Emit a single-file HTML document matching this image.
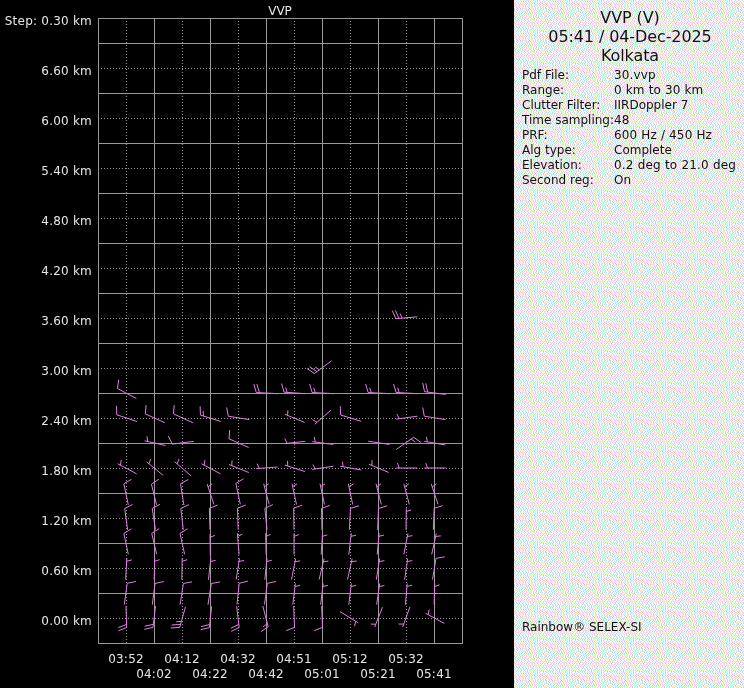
<!DOCTYPE html>
<html><head><meta charset="utf-8"><title>VVP</title>
<style>
html,body{margin:0;padding:0;background:#000;}
body{width:744px;height:688px;position:relative;overflow:hidden;font-family:"DejaVu Sans","Liberation Sans",sans-serif;color:#e6e6e6;}
#plot{position:absolute;left:0;top:0;width:744px;height:688px;}
.yl,.tl,#ttl,#panel div{will-change:transform;}
.yl{position:absolute;left:0;width:92px;text-align:right;font-size:12px;line-height:14px;height:14px;white-space:nowrap;letter-spacing:0.22px;}
.tl{position:absolute;width:60px;text-align:center;font-size:12px;line-height:14px;height:14px;white-space:nowrap;letter-spacing:0.22px;}
#ttl{position:absolute;left:229.6px;width:100px;text-align:center;top:4px;font-size:12px;line-height:14px;}
#panel{position:absolute;left:514px;top:0;width:230px;height:688px;background:#ebebeb;color:#111;}
#panel .h{position:absolute;left:0.5px;letter-spacing:-0.1px;width:230px;text-align:center;font-size:16px;line-height:19px;height:19px;white-space:nowrap;}
#panel .k{position:absolute;left:8px;font-size:12px;line-height:15px;height:15px;white-space:nowrap;}
#panel .v{position:absolute;left:100px;font-size:12px;line-height:15px;height:15px;white-space:nowrap;}
</style></head><body>

<svg id="plot" width="744" height="688" viewBox="0 0 744 688" shape-rendering="crispEdges">
<rect x="98" y="18" width="365" height="1" fill="#999999"/>
<rect x="98" y="43" width="365" height="1" fill="#999999"/>
<rect x="98" y="93" width="365" height="1" fill="#999999"/>
<rect x="98" y="143" width="365" height="1" fill="#999999"/>
<rect x="98" y="193" width="365" height="1" fill="#999999"/>
<rect x="98" y="243" width="365" height="1" fill="#999999"/>
<rect x="98" y="293" width="365" height="1" fill="#999999"/>
<rect x="98" y="343" width="365" height="1" fill="#999999"/>
<rect x="98" y="393" width="365" height="1" fill="#999999"/>
<rect x="98" y="443" width="365" height="1" fill="#999999"/>
<rect x="98" y="493" width="365" height="1" fill="#999999"/>
<rect x="98" y="543" width="365" height="1" fill="#999999"/>
<rect x="98" y="593" width="365" height="1" fill="#999999"/>
<rect x="98" y="643" width="365" height="1" fill="#999999"/>
<rect x="98" y="18" width="1" height="626" fill="#999999"/>
<rect x="154" y="18" width="1" height="626" fill="#999999"/>
<rect x="210" y="18" width="1" height="626" fill="#999999"/>
<rect x="266" y="18" width="1" height="626" fill="#999999"/>
<rect x="322" y="18" width="1" height="626" fill="#999999"/>
<rect x="378" y="18" width="1" height="626" fill="#999999"/>
<rect x="434" y="18" width="1" height="626" fill="#999999"/>
<rect x="462" y="18" width="1" height="626" fill="#999999"/>
<line x1="98.0" y1="68.5" x2="462" y2="68.5" stroke="#999999" stroke-width="1" stroke-dasharray="1 2" stroke-dashoffset="0"/>
<line x1="98.0" y1="118.5" x2="462" y2="118.5" stroke="#999999" stroke-width="1" stroke-dasharray="1 2" stroke-dashoffset="0"/>
<line x1="98.0" y1="168.5" x2="462" y2="168.5" stroke="#999999" stroke-width="1" stroke-dasharray="1 2" stroke-dashoffset="0"/>
<line x1="98.0" y1="218.5" x2="462" y2="218.5" stroke="#999999" stroke-width="1" stroke-dasharray="1 2" stroke-dashoffset="0"/>
<line x1="98.0" y1="268.5" x2="462" y2="268.5" stroke="#999999" stroke-width="1" stroke-dasharray="1 2" stroke-dashoffset="0"/>
<line x1="98.0" y1="318.5" x2="462" y2="318.5" stroke="#999999" stroke-width="1" stroke-dasharray="1 2" stroke-dashoffset="0"/>
<line x1="98.0" y1="368.5" x2="462" y2="368.5" stroke="#999999" stroke-width="1" stroke-dasharray="1 2" stroke-dashoffset="0"/>
<line x1="98.0" y1="418.5" x2="462" y2="418.5" stroke="#999999" stroke-width="1" stroke-dasharray="1 2" stroke-dashoffset="0"/>
<line x1="98.0" y1="468.5" x2="462" y2="468.5" stroke="#999999" stroke-width="1" stroke-dasharray="1 2" stroke-dashoffset="0"/>
<line x1="98.0" y1="518.5" x2="462" y2="518.5" stroke="#999999" stroke-width="1" stroke-dasharray="1 2" stroke-dashoffset="0"/>
<line x1="98.0" y1="568.5" x2="462" y2="568.5" stroke="#999999" stroke-width="1" stroke-dasharray="1 2" stroke-dashoffset="0"/>
<line x1="98.0" y1="618.5" x2="462" y2="618.5" stroke="#999999" stroke-width="1" stroke-dasharray="1 2" stroke-dashoffset="0"/>
<line x1="126.5" y1="18" x2="126.5" y2="643" stroke="#999999" stroke-width="1" stroke-dasharray="1 2"/>
<line x1="182.5" y1="18" x2="182.5" y2="643" stroke="#999999" stroke-width="1" stroke-dasharray="1 2"/>
<line x1="238.5" y1="18" x2="238.5" y2="643" stroke="#999999" stroke-width="1" stroke-dasharray="1 2"/>
<line x1="294.5" y1="18" x2="294.5" y2="643" stroke="#999999" stroke-width="1" stroke-dasharray="1 2"/>
<line x1="350.5" y1="18" x2="350.5" y2="643" stroke="#999999" stroke-width="1" stroke-dasharray="1 2"/>
<line x1="406.5" y1="18" x2="406.5" y2="643" stroke="#999999" stroke-width="1" stroke-dasharray="1 2"/>
</svg>
<svg id="barbs" style="position:absolute;left:0;top:0" width="744" height="688" viewBox="0 0 744 688"><g stroke="#e27ee2" stroke-width="1" fill="none" stroke-linecap="butt">
<path d="M126.00 606.14L126.67 627.53M126.67 627.53L118.37 630.76M126.57 624.43L118.28 627.66"/>
<path d="M124.33 604.52L127.17 583.31M127.17 583.31L135.88 581.48"/>
<path d="M125.66 579.60L126.84 558.23M126.67 561.33L131.66 559.86"/>
<path d="M128.31 554.38L123.86 533.45M123.86 533.45L131.45 528.80"/>
<path d="M155.52 606.13L152.98 627.37M152.98 627.37L144.29 629.32M153.34 624.30L144.66 626.25"/>
<path d="M152.31 604.70L155.03 583.47M155.03 583.47L163.72 581.59"/>
<path d="M154.16 579.61L154.67 558.22M154.60 561.32L159.54 559.70"/>
<path d="M156.59 554.17L151.74 533.33M151.74 533.33L159.24 528.53"/>
<path d="M185.47 606.78L179.70 627.39M179.70 627.39L170.82 627.99M180.53 624.40L171.65 625.00M181.37 621.42L176.18 621.77"/>
<path d="M180.14 604.66L183.36 583.50M183.36 583.50L192.10 581.83"/>
<path d="M181.83 579.62L182.17 558.22M182.12 561.32L187.05 559.66"/>
<path d="M184.64 554.37L180.03 533.47M180.03 533.47L187.58 528.76"/>
<path d="M211.65 606.36L209.35 627.64M209.35 627.64L200.69 629.69M209.69 624.56L201.03 626.61"/>
<path d="M207.98 604.65L211.36 583.52M211.36 583.52L220.11 581.91"/>
<path d="M208.48 579.72L210.86 558.45M210.51 561.53L215.58 560.35"/>
<path d="M127.63 529.77L124.70 508.57M124.70 508.57L132.60 504.47"/>
<path d="M128.29 504.80L123.87 483.86M123.87 483.86L131.47 479.23"/>
<path d="M136.60 473.80L117.73 463.70M120.47 465.16L121.25 460.02"/>
<path d="M155.44 529.58L152.23 508.42M152.23 508.42L160.08 504.23"/>
<path d="M156.56 504.89L151.44 484.11M151.44 484.11L158.88 479.22"/>
<path d="M163.13 475.34L146.53 461.83M148.94 463.79L150.69 458.89"/>
<path d="M183.31 529.80L180.86 508.54M180.86 508.54L188.85 504.62"/>
<path d="M183.82 504.91L180.51 483.76M180.51 483.76L188.35 479.53"/>
<path d="M190.92 475.76L174.75 461.74M177.09 463.77L178.99 458.93"/>
<path d="M210.33 555.53L210.00 534.13M210.05 537.23L214.92 535.42"/>
<path d="M209.99 529.70L209.34 508.30M209.34 508.30L217.64 505.08"/>
<path d="M213.88 504.32L207.12 484.02M208.10 486.96L212.20 483.76"/>
<path d="M220.37 473.76L201.46 463.74M204.20 465.19L204.97 460.05"/>
<path d="M136.37 398.51L117.46 388.49M117.46 388.49L118.77 379.69"/>
<path d="M137.08 421.53L116.76 414.81M116.76 414.81L116.57 405.91"/>
<path d="M164.83 422.75L145.34 413.91M145.34 413.91L146.10 405.04"/>
<path d="M165.52 445.51L144.64 440.83M147.67 441.51L147.04 436.34"/>
<path d="M192.90 422.79L173.44 413.88M173.44 413.88L174.23 405.02"/>
<path d="M193.61 441.36L172.39 444.14M172.39 444.14L168.36 436.20"/>
<path d="M220.88 421.52L200.45 415.14M200.45 415.14L200.12 406.25M203.41 416.07L203.22 410.87"/>
<path d="M236.67 606.21L239.16 627.46M239.16 627.46L231.18 631.39M238.80 624.38L230.81 628.31"/>
<path d="M236.99 604.56L239.17 583.27M239.17 583.27L247.82 581.17"/>
<path d="M236.17 579.49L239.50 558.35M239.02 561.41L244.13 560.46"/>
<path d="M239.17 554.58L237.33 533.26M237.59 536.35L242.33 534.19"/>
<path d="M262.81 606.06L268.19 626.77M268.19 626.77L260.82 631.76M267.41 623.77L263.11 626.69"/>
<path d="M264.50 604.52L267.34 583.31M267.34 583.31L276.05 581.48"/>
<path d="M264.81 579.73L267.02 558.44M266.70 561.52L271.76 560.30"/>
<path d="M266.17 554.61L265.66 533.22M265.74 536.32L270.60 534.47"/>
<path d="M293.66 605.98L294.51 627.36M294.51 627.36L286.24 630.66"/>
<path d="M292.81 604.71L295.36 583.46M294.99 586.54L300.06 585.40"/>
<path d="M291.48 579.58L295.68 558.59M295.07 561.63L300.22 560.89"/>
<path d="M294.00 554.62L294.00 533.22M294.00 536.32L298.90 534.58"/>
<path d="M321.66 605.98L322.51 627.36M322.51 627.36L314.24 630.66"/>
<path d="M320.64 604.71L323.19 583.46M322.82 586.54L327.90 585.40"/>
<path d="M319.17 579.51L324.00 558.66M323.30 561.68L328.47 561.10"/>
<path d="M321.16 554.60L322.51 533.24M322.31 536.33L327.31 534.91"/>
<path d="M238.16 529.70L237.51 508.30M237.51 508.30L245.80 505.08"/>
<path d="M240.31 504.38L235.86 483.45M235.86 483.45L243.45 478.80"/>
<path d="M248.74 472.53L228.92 464.47M231.79 465.64L232.03 460.44"/>
<path d="M266.97 529.65L264.87 508.35M264.87 508.35L272.93 504.57"/>
<path d="M269.15 504.43L263.69 483.74M264.48 486.74L268.77 483.81"/>
<path d="M277.50 467.00L256.17 468.67M259.26 468.43L257.14 463.67"/>
<path d="M294.00 529.70L293.67 508.30M293.67 508.30L302.01 505.20"/>
<path d="M296.51 504.54L291.99 483.62M292.65 486.65L297.07 483.92"/>
<path d="M305.11 471.59L284.73 465.07M287.68 466.02L287.52 460.82"/>
<path d="M322.00 529.86L321.50 508.47M321.50 508.47L329.82 505.31"/>
<path d="M324.51 504.54L319.99 483.62M320.65 486.65L325.07 483.92"/>
<path d="M333.41 466.21L312.26 469.46M315.32 468.99L312.86 464.41"/>
<path d="M248.62 447.48L229.04 438.85M229.04 438.85L229.71 429.98"/>
<path d="M249.39 419.65L228.27 416.18M228.27 416.18L226.70 407.42"/>
<path d="M277.68 393.66L256.32 392.51M256.32 392.51L253.80 383.97M259.41 392.67L256.90 384.14"/>
<path d="M305.34 393.67L283.99 392.17M283.99 392.17L281.62 383.59M287.09 392.38L285.70 387.37"/>
<path d="M304.57 422.39L284.77 414.28M287.63 415.45L287.89 410.26"/>
<path d="M305.30 441.34L284.03 443.66M287.11 443.33L284.85 438.64"/>
<path d="M333.52 393.66L312.15 392.51M312.15 392.51L309.63 383.97M315.24 392.67L313.77 387.69"/>
<path d="M330.91 410.23L314.76 424.27M317.10 422.24L312.57 419.68"/>
<path d="M333.44 444.47L312.22 441.70M315.30 442.10L314.21 437.01"/>
<path d="M340.03 611.68L358.30 622.82M355.66 621.20L354.59 626.29"/>
<path d="M348.81 604.71L351.36 583.46M350.99 586.54L356.06 585.40"/>
<path d="M347.49 579.52L352.17 558.64M351.49 561.67L356.66 561.04"/>
<path d="M348.83 554.54L351.34 533.29M350.97 536.37L356.05 535.22"/>
<path d="M382.49 607.20L374.68 627.13M375.81 624.24L370.61 624.07"/>
<path d="M376.64 604.67L379.69 583.49M379.25 586.56L384.35 585.54"/>
<path d="M376.31 579.65L379.69 558.52M379.20 561.58L384.32 560.64"/>
<path d="M377.16 554.57L379.17 533.26M378.88 536.35L383.92 535.08"/>
<path d="M409.94 606.84L402.73 626.99M403.77 624.07L398.57 624.06"/>
<path d="M405.48 604.75L407.19 583.42M406.94 586.51L411.96 585.17"/>
<path d="M404.64 579.67L407.69 558.49M407.25 561.56L412.35 560.54"/>
<path d="M403.85 554.42L407.98 533.42M407.38 536.46L412.53 535.70"/>
<path d="M444.30 623.47L425.53 613.20M428.25 614.69L429.08 609.55"/>
<path d="M434.16 604.78L434.67 583.39M434.60 586.49L439.54 584.87"/>
<path d="M432.50 579.47L436.00 558.36M436.00 558.36L444.76 556.80"/>
<path d="M431.70 554.37L436.30 533.47M435.64 536.49L440.80 535.86"/>
<path d="M349.35 529.68L350.48 508.32M350.48 508.32L359.02 505.79"/>
<path d="M352.68 504.56L348.32 483.61M348.95 486.64L353.40 483.94"/>
<path d="M361.20 469.98L340.14 466.19M343.19 466.74L342.34 461.61"/>
<path d="M377.67 529.86L378.49 508.47M378.49 508.47L386.99 505.83"/>
<path d="M381.32 504.45L376.01 483.72M376.78 486.72L381.10 483.82"/>
<path d="M388.71 472.45L368.96 464.22M371.82 465.41L372.10 460.22"/>
<path d="M406.00 529.87L406.33 508.47M406.28 511.57L411.21 509.91"/>
<path d="M409.31 504.43L403.85 483.74M404.64 486.74L408.94 483.81"/>
<path d="M417.53 468.00L396.13 468.00M399.23 468.00L397.50 463.10"/>
<path d="M433.34 529.69L434.16 508.31M434.16 508.31L442.65 505.66"/>
<path d="M438.05 504.32L431.28 484.02M432.26 486.96L436.36 483.76"/>
<path d="M445.78 468.00L424.38 468.00M427.48 468.00L425.75 463.10"/>
<path d="M361.15 421.28L340.68 415.05M340.68 415.05L340.28 406.16"/>
<path d="M389.52 393.66L368.15 392.51M368.15 392.51L365.63 383.97M371.24 392.67L369.77 387.69"/>
<path d="M389.41 444.46L368.26 441.21"/>
<path d="M417.43 393.65L396.07 392.51M396.07 392.51L393.55 383.98M399.16 392.68L397.69 387.69"/>
<path d="M417.43 416.20L396.23 419.13M399.31 418.71L396.91 414.09"/>
<path d="M396.15 449.56L413.68 437.28M413.68 437.28L420.93 442.44M411.14 439.05L415.37 442.07"/>
<path d="M445.78 394.47L424.56 391.70M424.56 391.70L422.70 382.99M427.63 392.10L425.77 383.39"/>
<path d="M445.39 419.65L424.27 416.18M424.27 416.18L422.70 407.42"/>
<path d="M445.38 444.98L424.29 441.35M427.34 441.88L426.46 436.75"/>
<path d="M331.63 360.73L314.47 373.52M314.47 373.52L307.08 368.57M316.96 371.67L309.56 366.72M319.44 369.81L315.12 366.92"/>
<path d="M417.28 316.82L395.97 318.68M395.97 318.68L392.28 310.58M399.05 318.41L395.36 310.31M402.14 318.14L399.99 313.41"/>
</g></svg>
<div id="ttl">VVP</div>
<div class="yl" style="top:14.4px">Step: 0.30 km</div>
<div class="yl" style="top:64.4px">6.60 km</div>
<div class="yl" style="top:114.4px">6.00 km</div>
<div class="yl" style="top:164.4px">5.40 km</div>
<div class="yl" style="top:214.4px">4.80 km</div>
<div class="yl" style="top:264.4px">4.20 km</div>
<div class="yl" style="top:314.4px">3.60 km</div>
<div class="yl" style="top:364.4px">3.00 km</div>
<div class="yl" style="top:414.4px">2.40 km</div>
<div class="yl" style="top:464.4px">1.80 km</div>
<div class="yl" style="top:514.4px">1.20 km</div>
<div class="yl" style="top:564.4px">0.60 km</div>
<div class="yl" style="top:614.4px">0.00 km</div>
<div class="tl" style="left:96px;top:652px">03:52</div>
<div class="tl" style="left:124px;top:667px">04:02</div>
<div class="tl" style="left:152px;top:652px">04:12</div>
<div class="tl" style="left:180px;top:667px">04:22</div>
<div class="tl" style="left:208px;top:652px">04:32</div>
<div class="tl" style="left:236px;top:667px">04:42</div>
<div class="tl" style="left:264px;top:652px">04:51</div>
<div class="tl" style="left:292px;top:667px">05:01</div>
<div class="tl" style="left:320px;top:652px">05:12</div>
<div class="tl" style="left:348px;top:667px">05:21</div>
<div class="tl" style="left:376px;top:652px">05:32</div>
<div class="tl" style="left:404px;top:667px">05:41</div>
<div id="panel">
<svg id="dither" width="230" height="688" style="position:absolute;left:0;top:0" shape-rendering="crispEdges"><defs><pattern id="dth" width="32" height="32" patternUnits="userSpaceOnUse"><rect width="32" height="32" fill="#fff"/><path fill="#ffccff" d="M0 0h1v1h-1zM3 0h1v1h-1zM14 0h1v1h-1zM17 0h1v1h-1zM5 1h1v1h-1zM20 1h1v1h-1zM26 1h1v1h-1zM7 2h1v1h-1zM15 2h1v1h-1zM19 2h1v1h-1zM21 2h1v1h-1zM24 2h1v1h-1zM28 2h1v1h-1zM30 2h1v1h-1zM1 3h1v1h-1zM9 3h1v1h-1zM15 3h1v1h-1zM4 4h1v1h-1zM6 4h1v1h-1zM26 4h1v1h-1zM19 5h1v1h-1zM21 5h1v1h-1zM30 5h1v1h-1zM4 6h1v1h-1zM18 6h1v1h-1zM23 6h1v1h-1zM2 7h1v1h-1zM8 7h1v1h-1zM11 7h1v1h-1zM17 7h1v1h-1zM28 7h1v1h-1zM10 8h1v1h-1zM12 8h1v1h-1zM17 8h1v1h-1zM29 8h1v1h-1zM31 8h1v1h-1zM4 9h1v1h-1zM6 9h1v1h-1zM8 9h1v1h-1zM11 9h1v1h-1zM19 9h1v1h-1zM9 10h1v1h-1zM14 10h1v1h-1zM17 10h1v1h-1zM20 10h1v1h-1zM30 10h1v1h-1zM0 11h1v1h-1zM2 11h1v1h-1zM9 11h1v1h-1zM19 11h1v1h-1zM30 11h1v1h-1zM15 12h1v1h-1zM25 12h1v1h-1zM27 12h1v1h-1zM3 13h1v1h-1zM5 13h1v1h-1zM18 13h1v1h-1zM24 13h1v1h-1zM26 13h1v1h-1zM13 14h1v1h-1zM25 14h1v1h-1zM5 15h1v1h-1zM14 15h1v1h-1zM16 15h1v1h-1zM24 15h1v1h-1zM27 15h1v1h-1zM30 15h1v1h-1zM15 16h1v1h-1zM17 16h1v1h-1zM4 17h1v1h-1zM11 17h1v1h-1zM14 17h1v1h-1zM16 17h1v1h-1zM28 17h1v1h-1zM1 18h1v1h-1zM10 18h1v1h-1zM12 18h1v1h-1zM14 18h1v1h-1zM17 18h1v1h-1zM27 18h1v1h-1zM1 19h1v1h-1zM13 19h1v1h-1zM18 19h1v1h-1zM20 19h1v1h-1zM29 19h1v1h-1zM1 20h1v1h-1zM19 20h1v1h-1zM3 21h1v1h-1zM13 21h1v1h-1zM15 21h1v1h-1zM18 21h1v1h-1zM6 22h1v1h-1zM8 22h1v1h-1zM11 22h1v1h-1zM16 22h1v1h-1zM18 22h1v1h-1zM24 22h1v1h-1zM27 22h1v1h-1zM5 23h1v1h-1zM15 23h1v1h-1zM17 23h1v1h-1zM31 23h1v1h-1zM2 24h1v1h-1zM4 24h1v1h-1zM7 24h1v1h-1zM9 24h1v1h-1zM12 24h1v1h-1zM18 24h1v1h-1zM21 24h1v1h-1zM22 25h1v1h-1zM24 25h1v1h-1zM14 26h1v1h-1zM16 26h1v1h-1zM22 26h1v1h-1zM25 26h1v1h-1zM27 26h1v1h-1zM0 27h1v1h-1zM13 27h1v1h-1zM16 27h1v1h-1zM18 27h1v1h-1zM31 27h1v1h-1zM17 28h1v1h-1zM19 28h1v1h-1zM22 28h1v1h-1zM25 28h1v1h-1zM27 28h1v1h-1zM7 29h1v1h-1zM16 29h1v1h-1zM19 29h1v1h-1zM26 29h1v1h-1zM1 30h1v1h-1zM3 30h1v1h-1zM5 30h1v1h-1zM15 30h1v1h-1zM17 30h1v1h-1zM23 30h1v1h-1zM25 30h1v1h-1zM0 31h1v1h-1zM16 31h1v1h-1zM19 31h1v1h-1zM21 31h1v1h-1z"/><path fill="#ccffcc" d="M1 0h1v1h-1zM4 0h1v1h-1zM18 1h1v1h-1zM25 1h1v1h-1zM20 2h1v1h-1zM29 2h1v1h-1zM8 3h1v1h-1zM11 3h1v1h-1zM16 3h1v1h-1zM5 4h1v1h-1zM27 4h1v1h-1zM20 5h1v1h-1zM31 5h1v1h-1zM17 6h1v1h-1zM22 6h1v1h-1zM3 7h1v1h-1zM7 7h1v1h-1zM12 7h1v1h-1zM18 7h1v1h-1zM29 7h1v1h-1zM11 8h1v1h-1zM5 9h1v1h-1zM7 9h1v1h-1zM18 9h1v1h-1zM31 9h1v1h-1zM8 10h1v1h-1zM10 10h1v1h-1zM16 10h1v1h-1zM21 10h1v1h-1zM1 11h1v1h-1zM20 11h1v1h-1zM31 11h1v1h-1zM13 12h1v1h-1zM16 12h1v1h-1zM24 12h1v1h-1zM26 12h1v1h-1zM4 13h1v1h-1zM23 13h1v1h-1zM27 13h1v1h-1zM14 14h1v1h-1zM24 14h1v1h-1zM15 15h1v1h-1zM17 15h1v1h-1zM31 15h1v1h-1zM4 16h1v1h-1zM16 16h1v1h-1zM10 17h1v1h-1zM12 17h1v1h-1zM15 17h1v1h-1zM27 17h1v1h-1zM0 18h1v1h-1zM13 18h1v1h-1zM18 18h1v1h-1zM28 18h1v1h-1zM2 19h1v1h-1zM14 19h1v1h-1zM19 19h1v1h-1zM20 20h1v1h-1zM29 20h1v1h-1zM2 21h1v1h-1zM12 21h1v1h-1zM14 21h1v1h-1zM19 21h1v1h-1zM7 22h1v1h-1zM17 22h1v1h-1zM25 22h1v1h-1zM4 23h1v1h-1zM14 23h1v1h-1zM18 23h1v1h-1zM30 23h1v1h-1zM1 24h1v1h-1zM3 24h1v1h-1zM5 24h1v1h-1zM8 24h1v1h-1zM11 24h1v1h-1zM17 24h1v1h-1zM22 24h1v1h-1zM23 25h1v1h-1zM15 26h1v1h-1zM21 26h1v1h-1zM24 26h1v1h-1zM26 26h1v1h-1zM14 27h1v1h-1zM17 27h1v1h-1zM19 27h1v1h-1zM30 27h1v1h-1zM18 28h1v1h-1zM26 28h1v1h-1zM31 28h1v1h-1zM15 29h1v1h-1zM17 29h1v1h-1zM25 29h1v1h-1zM2 30h1v1h-1zM16 30h1v1h-1zM18 30h1v1h-1zM22 30h1v1h-1zM20 31h1v1h-1z"/><path fill="#cccccc" d="M6 0h1v1h-1zM23 0h1v1h-1zM7 1h1v1h-1zM9 1h1v1h-1zM14 1h1v1h-1zM16 1h1v1h-1zM28 1h1v1h-1zM23 3h1v1h-1zM25 3h1v1h-1zM31 3h1v1h-1zM12 4h1v1h-1zM1 5h1v1h-1zM0 6h1v1h-1zM11 6h1v1h-1zM5 7h1v1h-1zM31 7h1v1h-1zM3 8h1v1h-1zM6 8h1v1h-1zM19 8h1v1h-1zM2 9h1v1h-1zM26 9h1v1h-1zM29 9h1v1h-1zM5 11h1v1h-1zM13 11h1v1h-1zM15 11h1v1h-1zM2 12h1v1h-1zM8 12h1v1h-1zM18 12h1v1h-1zM10 13h1v1h-1zM12 13h1v1h-1zM29 13h1v1h-1zM10 15h1v1h-1zM12 15h1v1h-1zM19 15h1v1h-1zM6 16h1v1h-1zM19 16h1v1h-1zM24 16h1v1h-1zM26 16h1v1h-1zM28 16h1v1h-1zM8 17h1v1h-1zM24 17h1v1h-1zM3 18h1v1h-1zM20 18h1v1h-1zM25 18h1v1h-1zM4 19h1v1h-1zM10 19h1v1h-1zM22 19h1v1h-1zM31 19h1v1h-1zM5 20h1v1h-1zM11 20h1v1h-1zM16 20h1v1h-1zM26 21h1v1h-1zM28 21h1v1h-1zM30 21h1v1h-1zM2 22h1v1h-1zM13 22h1v1h-1zM1 23h1v1h-1zM10 23h1v1h-1zM12 23h1v1h-1zM23 23h1v1h-1zM26 23h1v1h-1zM28 23h1v1h-1zM27 24h1v1h-1zM10 25h1v1h-1zM16 25h1v1h-1zM18 25h1v1h-1zM2 26h1v1h-1zM9 26h1v1h-1zM5 27h1v1h-1zM8 27h1v1h-1zM11 27h1v1h-1zM25 27h1v1h-1zM28 27h1v1h-1zM12 28h1v1h-1zM3 29h1v1h-1zM23 29h1v1h-1zM20 30h1v1h-1zM13 31h1v1h-1zM23 31h1v1h-1zM31 31h1v1h-1z"/><path fill="#ffcccc" d="M9 0h1v1h-1zM19 0h1v1h-1zM21 0h1v1h-1zM25 0h1v1h-1zM29 0h1v1h-1zM31 1h1v1h-1zM3 2h1v1h-1zM10 2h1v1h-1zM26 2h1v1h-1zM4 3h1v1h-1zM6 3h1v1h-1zM0 4h1v1h-1zM2 4h1v1h-1zM8 4h1v1h-1zM10 4h1v1h-1zM15 4h1v1h-1zM21 4h1v1h-1zM24 4h1v1h-1zM14 5h1v1h-1zM17 5h1v1h-1zM2 6h1v1h-1zM13 6h1v1h-1zM15 6h1v1h-1zM21 7h1v1h-1zM24 7h1v1h-1zM26 7h1v1h-1zM8 8h1v1h-1zM21 8h1v1h-1zM23 8h1v1h-1zM0 9h1v1h-1zM24 9h1v1h-1zM3 10h1v1h-1zM6 10h1v1h-1zM12 10h1v1h-1zM22 10h1v1h-1zM25 10h1v1h-1zM27 10h1v1h-1zM17 11h1v1h-1zM28 11h1v1h-1zM11 12h1v1h-1zM20 12h1v1h-1zM22 12h1v1h-1zM1 13h1v1h-1zM2 14h1v1h-1zM5 14h1v1h-1zM7 14h1v1h-1zM9 14h1v1h-1zM27 14h1v1h-1zM8 15h1v1h-1zM9 16h1v1h-1zM12 16h1v1h-1zM31 16h1v1h-1zM1 17h1v1h-1zM6 17h1v1h-1zM30 17h1v1h-1zM5 18h1v1h-1zM8 18h1v1h-1zM30 18h1v1h-1zM7 19h1v1h-1zM16 19h1v1h-1zM26 19h1v1h-1zM3 20h1v1h-1zM7 20h1v1h-1zM9 20h1v1h-1zM24 21h1v1h-1zM0 22h1v1h-1zM4 22h1v1h-1zM20 22h1v1h-1zM22 22h1v1h-1zM20 23h1v1h-1zM14 24h1v1h-1zM24 24h1v1h-1zM30 24h1v1h-1zM1 25h1v1h-1zM4 25h1v1h-1zM13 25h1v1h-1zM20 25h1v1h-1zM26 25h1v1h-1zM29 25h1v1h-1zM31 25h1v1h-1zM5 26h1v1h-1zM7 26h1v1h-1zM11 26h1v1h-1zM3 27h1v1h-1zM21 27h1v1h-1zM23 27h1v1h-1zM9 28h1v1h-1zM29 28h1v1h-1zM11 29h1v1h-1zM13 29h1v1h-1zM4 31h1v1h-1zM6 31h1v1h-1z"/><path fill="#ccffff" d="M10 0h1v1h-1zM15 0h1v1h-1zM18 0h1v1h-1zM20 0h1v1h-1zM26 0h1v1h-1zM30 0h1v1h-1zM4 1h1v1h-1zM21 1h1v1h-1zM30 1h1v1h-1zM4 2h1v1h-1zM6 2h1v1h-1zM9 2h1v1h-1zM14 2h1v1h-1zM22 2h1v1h-1zM25 2h1v1h-1zM27 2h1v1h-1zM0 3h1v1h-1zM3 3h1v1h-1zM5 3h1v1h-1zM1 4h1v1h-1zM7 4h1v1h-1zM9 4h1v1h-1zM14 4h1v1h-1zM20 4h1v1h-1zM22 4h1v1h-1zM25 4h1v1h-1zM31 4h1v1h-1zM3 5h1v1h-1zM13 5h1v1h-1zM16 5h1v1h-1zM18 5h1v1h-1zM3 6h1v1h-1zM14 6h1v1h-1zM1 7h1v1h-1zM9 7h1v1h-1zM16 7h1v1h-1zM20 7h1v1h-1zM23 7h1v1h-1zM25 7h1v1h-1zM27 7h1v1h-1zM9 8h1v1h-1zM22 8h1v1h-1zM24 8h1v1h-1zM30 8h1v1h-1zM9 9h1v1h-1zM12 9h1v1h-1zM23 9h1v1h-1zM2 10h1v1h-1zM4 10h1v1h-1zM13 10h1v1h-1zM19 10h1v1h-1zM24 10h1v1h-1zM26 10h1v1h-1zM28 10h1v1h-1zM18 11h1v1h-1zM29 11h1v1h-1zM6 12h1v1h-1zM10 12h1v1h-1zM21 12h1v1h-1zM28 12h1v1h-1zM0 13h1v1h-1zM2 13h1v1h-1zM19 13h1v1h-1zM1 14h1v1h-1zM4 14h1v1h-1zM6 14h1v1h-1zM8 14h1v1h-1zM11 14h1v1h-1zM26 14h1v1h-1zM7 15h1v1h-1zM25 15h1v1h-1zM28 15h1v1h-1zM8 16h1v1h-1zM11 16h1v1h-1zM13 16h1v1h-1zM30 16h1v1h-1zM2 17h1v1h-1zM5 17h1v1h-1zM17 17h1v1h-1zM31 17h1v1h-1zM6 18h1v1h-1zM9 18h1v1h-1zM15 18h1v1h-1zM29 18h1v1h-1zM0 19h1v1h-1zM6 19h1v1h-1zM8 19h1v1h-1zM12 19h1v1h-1zM17 19h1v1h-1zM25 19h1v1h-1zM27 19h1v1h-1zM2 20h1v1h-1zM8 20h1v1h-1zM4 21h1v1h-1zM17 21h1v1h-1zM23 21h1v1h-1zM5 22h1v1h-1zM9 22h1v1h-1zM15 22h1v1h-1zM19 22h1v1h-1zM23 22h1v1h-1zM21 23h1v1h-1zM15 24h1v1h-1zM19 24h1v1h-1zM25 24h1v1h-1zM31 24h1v1h-1zM0 25h1v1h-1zM3 25h1v1h-1zM8 25h1v1h-1zM12 25h1v1h-1zM14 25h1v1h-1zM21 25h1v1h-1zM25 25h1v1h-1zM28 25h1v1h-1zM30 25h1v1h-1zM4 26h1v1h-1zM6 26h1v1h-1zM12 26h1v1h-1zM2 27h1v1h-1zM22 27h1v1h-1zM8 28h1v1h-1zM10 28h1v1h-1zM16 28h1v1h-1zM20 28h1v1h-1zM23 28h1v1h-1zM28 28h1v1h-1zM6 29h1v1h-1zM12 29h1v1h-1zM27 29h1v1h-1zM0 30h1v1h-1zM4 30h1v1h-1zM24 30h1v1h-1zM5 31h1v1h-1zM7 31h1v1h-1zM15 31h1v1h-1z"/><path fill="#ffffcc" d="M11 0h1v1h-1zM13 0h1v1h-1zM16 0h1v1h-1zM27 0h1v1h-1zM1 1h1v1h-1zM3 1h1v1h-1zM12 1h1v1h-1zM22 1h1v1h-1zM0 2h1v1h-1zM5 2h1v1h-1zM8 2h1v1h-1zM13 2h1v1h-1zM16 2h1v1h-1zM18 2h1v1h-1zM23 2h1v1h-1zM2 3h1v1h-1zM14 3h1v1h-1zM19 3h1v1h-1zM21 3h1v1h-1zM27 3h1v1h-1zM29 3h1v1h-1zM18 4h1v1h-1zM30 4h1v1h-1zM4 5h1v1h-1zM7 5h1v1h-1zM9 5h1v1h-1zM12 5h1v1h-1zM22 5h1v1h-1zM24 5h1v1h-1zM26 5h1v1h-1zM29 5h1v1h-1zM5 6h1v1h-1zM8 6h1v1h-1zM19 6h1v1h-1zM25 6h1v1h-1zM27 6h1v1h-1zM30 6h1v1h-1zM10 7h1v1h-1zM15 7h1v1h-1zM1 8h1v1h-1zM14 8h1v1h-1zM16 8h1v1h-1zM26 8h1v1h-1zM28 8h1v1h-1zM10 9h1v1h-1zM13 9h1v1h-1zM15 9h1v1h-1zM20 9h1v1h-1zM18 10h1v1h-1zM29 10h1v1h-1zM3 11h1v1h-1zM10 11h1v1h-1zM24 11h1v1h-1zM0 12h1v1h-1zM5 12h1v1h-1zM7 12h1v1h-1zM29 12h1v1h-1zM6 13h1v1h-1zM15 13h1v1h-1zM17 13h1v1h-1zM20 13h1v1h-1zM25 13h1v1h-1zM31 13h1v1h-1zM0 14h1v1h-1zM12 14h1v1h-1zM18 14h1v1h-1zM21 14h1v1h-1zM30 14h1v1h-1zM2 15h1v1h-1zM4 15h1v1h-1zM21 15h1v1h-1zM23 15h1v1h-1zM26 15h1v1h-1zM29 15h1v1h-1zM1 16h1v1h-1zM14 16h1v1h-1zM22 16h1v1h-1zM3 17h1v1h-1zM18 17h1v1h-1zM21 17h1v1h-1zM11 18h1v1h-1zM16 18h1v1h-1zM22 18h1v1h-1zM24 19h1v1h-1zM28 19h1v1h-1zM0 20h1v1h-1zM13 20h1v1h-1zM18 20h1v1h-1zM23 20h1v1h-1zM26 20h1v1h-1zM6 21h1v1h-1zM9 21h1v1h-1zM16 21h1v1h-1zM22 21h1v1h-1zM10 22h1v1h-1zM28 22h1v1h-1zM31 22h1v1h-1zM6 23h1v1h-1zM8 23h1v1h-1zM16 23h1v1h-1zM20 24h1v1h-1zM7 25h1v1h-1zM13 26h1v1h-1zM18 26h1v1h-1zM28 26h1v1h-1zM1 27h1v1h-1zM2 28h1v1h-1zM5 28h1v1h-1zM7 28h1v1h-1zM15 28h1v1h-1zM21 28h1v1h-1zM24 28h1v1h-1zM1 29h1v1h-1zM5 29h1v1h-1zM8 29h1v1h-1zM20 29h1v1h-1zM28 29h1v1h-1zM31 29h1v1h-1zM6 30h1v1h-1zM9 30h1v1h-1zM11 30h1v1h-1zM14 30h1v1h-1zM26 30h1v1h-1zM28 30h1v1h-1zM30 30h1v1h-1zM1 31h1v1h-1zM8 31h1v1h-1zM10 31h1v1h-1zM17 31h1v1h-1zM25 31h1v1h-1zM28 31h1v1h-1z"/><path fill="#ccccff" d="M12 0h1v1h-1zM2 1h1v1h-1zM11 1h1v1h-1zM23 1h1v1h-1zM1 2h1v1h-1zM12 2h1v1h-1zM17 2h1v1h-1zM13 3h1v1h-1zM18 3h1v1h-1zM20 3h1v1h-1zM28 3h1v1h-1zM17 4h1v1h-1zM29 4h1v1h-1zM5 5h1v1h-1zM8 5h1v1h-1zM11 5h1v1h-1zM23 5h1v1h-1zM25 5h1v1h-1zM28 5h1v1h-1zM6 6h1v1h-1zM9 6h1v1h-1zM20 6h1v1h-1zM26 6h1v1h-1zM29 6h1v1h-1zM14 7h1v1h-1zM0 8h1v1h-1zM15 8h1v1h-1zM27 8h1v1h-1zM14 9h1v1h-1zM16 9h1v1h-1zM21 9h1v1h-1zM0 10h1v1h-1zM7 11h1v1h-1zM11 11h1v1h-1zM23 11h1v1h-1zM25 11h1v1h-1zM4 12h1v1h-1zM30 12h1v1h-1zM7 13h1v1h-1zM14 13h1v1h-1zM16 13h1v1h-1zM21 13h1v1h-1zM17 14h1v1h-1zM20 14h1v1h-1zM22 14h1v1h-1zM29 14h1v1h-1zM31 14h1v1h-1zM0 15h1v1h-1zM3 15h1v1h-1zM22 15h1v1h-1zM0 16h1v1h-1zM2 16h1v1h-1zM21 16h1v1h-1zM19 17h1v1h-1zM22 17h1v1h-1zM23 18h1v1h-1zM14 20h1v1h-1zM22 20h1v1h-1zM24 20h1v1h-1zM27 20h1v1h-1zM31 20h1v1h-1zM0 21h1v1h-1zM7 21h1v1h-1zM10 21h1v1h-1zM21 21h1v1h-1zM29 22h1v1h-1zM7 23h1v1h-1zM6 25h1v1h-1zM0 26h1v1h-1zM19 26h1v1h-1zM29 26h1v1h-1zM1 28h1v1h-1zM4 28h1v1h-1zM6 28h1v1h-1zM14 28h1v1h-1zM0 29h1v1h-1zM9 29h1v1h-1zM21 29h1v1h-1zM30 29h1v1h-1zM7 30h1v1h-1zM10 30h1v1h-1zM13 30h1v1h-1zM27 30h1v1h-1zM29 30h1v1h-1zM2 31h1v1h-1zM9 31h1v1h-1zM11 31h1v1h-1zM26 31h1v1h-1zM29 31h1v1h-1z"/></pattern></defs><rect x="0" y="0" width="230" height="688" fill="url(#dth)"/></svg>
<div class="h" style="top:8px">VVP (V)</div>
<div class="h" style="top:27px">05:41 / 04-Dec-2025</div>
<div class="h" style="top:46px">Kolkata</div>
<div class="k" style="top:68px">Pdf File:</div><div class="v" style="top:68px;letter-spacing:0.15px">30.vvp</div>
<div class="k" style="top:83px">Range:</div><div class="v" style="top:83px;letter-spacing:0.15px">0 km to 30 km</div>
<div class="k" style="top:98px">Clutter Filter:</div><div class="v" style="top:98px;letter-spacing:0px">IIRDoppler 7</div>
<div class="k" style="top:113px">Time sampling:</div><div class="v" style="top:113px;letter-spacing:0.2px">48</div>
<div class="k" style="top:128px">PRF:</div><div class="v" style="top:128px;letter-spacing:0.15px">600 Hz / 450 Hz</div>
<div class="k" style="top:143px">Alg type:</div><div class="v" style="top:143px;letter-spacing:0px">Complete</div>
<div class="k" style="top:158px">Elevation:</div><div class="v" style="top:158px;letter-spacing:0.2px">0.2 deg to 21.0 deg</div>
<div class="k" style="top:173px">Second reg:</div><div class="v" style="top:173px;letter-spacing:0px">On</div>
<div class="k" style="top:620px">Rainbow® SELEX-SI</div>
</div>
</body></html>
